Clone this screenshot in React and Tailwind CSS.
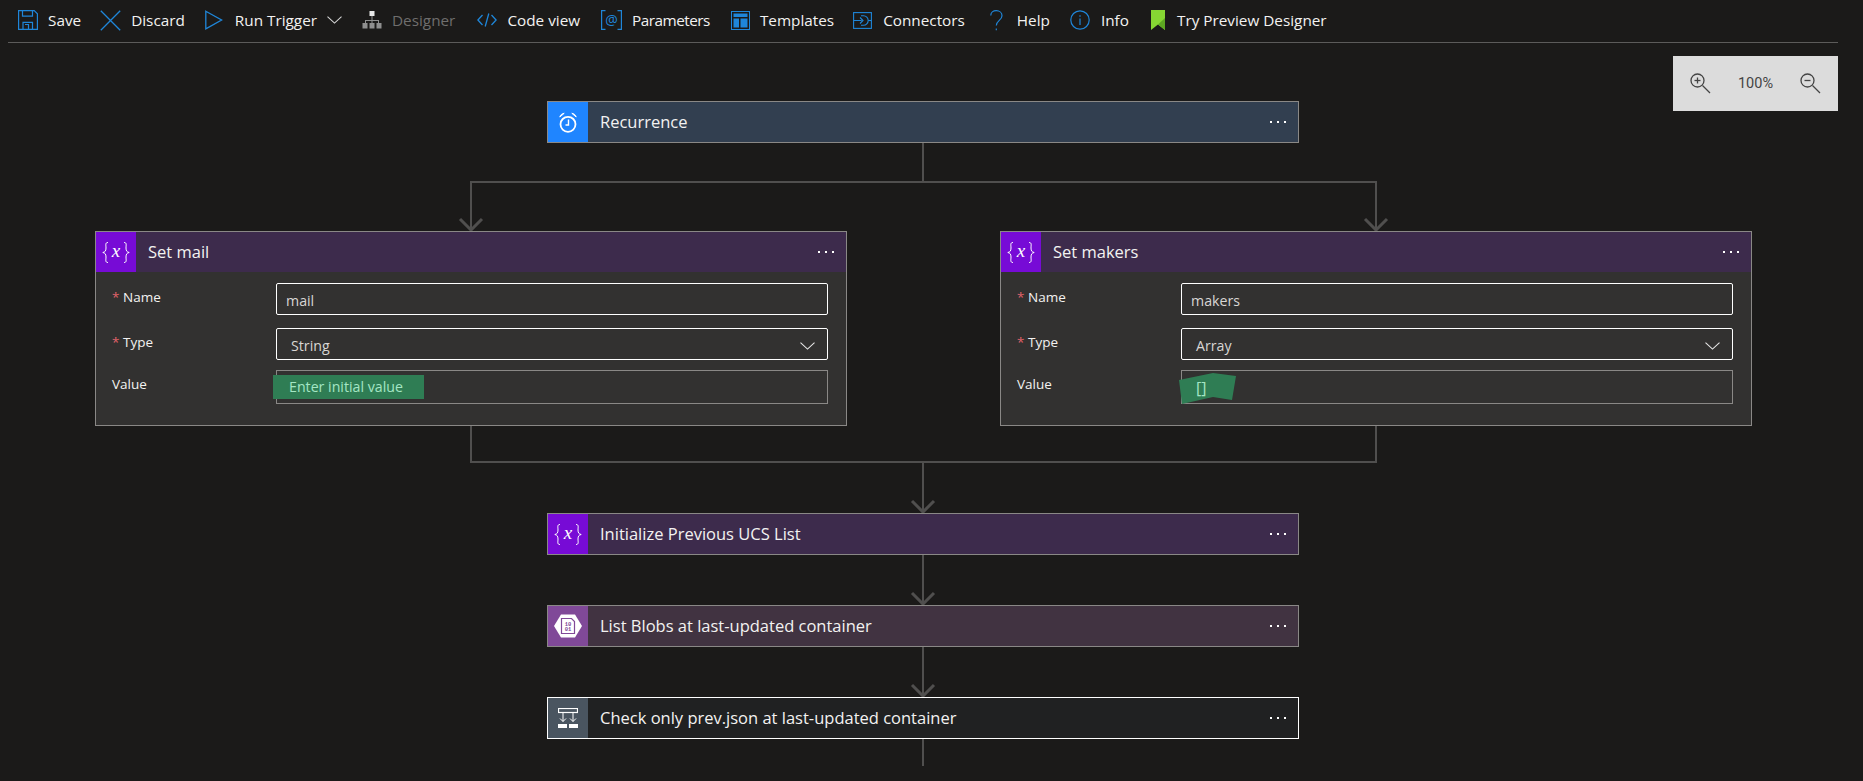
const BLUE = '#1f86d9'

function SaveIcon() {
  return (
    <svg width="20" height="20" viewBox="0 0 20 20" fill="none" stroke={BLUE} strokeWidth="1.2">
      <path d="M.6.6h15.6l3.2 3.2v15.6H.6z" />
      <path d="M4.5.6v5.6h10V.6" />
      <path d="M5 19.4v-7h9.5v7" />
      <path d="M7 14.5h3.5v4.9" />
    </svg>
  )
}

function DiscardIcon() {
  return (
    <svg width="21" height="21" viewBox="0 0 21 21" fill="none" stroke={BLUE} strokeWidth="1.3">
      <path d="M.8.8l19.4 19.4M20.2.8L.8 20.2" />
    </svg>
  )
}

function RunIcon() {
  return (
    <svg width="18" height="20" viewBox="0 0 18 20" fill="none" stroke={BLUE} strokeWidth="1.3">
      <path d="M.8 1.2l15.8 8.8L.8 18.8z" />
    </svg>
  )
}

function ChevronIcon({ width = 15, color = '#d6d6d6' }) {
  return (
    <svg width={width} height="8" viewBox="0 0 15 8" fill="none" stroke={color} strokeWidth="1.1">
      <path d="M.5.7l7 6.4 7-6.4" />
    </svg>
  )
}

function DesignerIcon() {
  return (
    <svg width="20" height="20" viewBox="0 0 20 20" fill="#8f8f8f">
      <rect x="7.5" y="1" width="5" height="5" fill="#e8e8e8" />
      <path d="M9.5 6h1v4H17v3h-1v-2h-5.500v2h-1v-2H4v2H3v-3h6.500z" />
      <rect x="0.500" y="13" width="5" height="5.500" />
      <rect x="7.500" y="13" width="5" height="5.500" />
      <rect x="14.500" y="13" width="5" height="5.500" />
    </svg>
  )
}

function CodeIcon() {
  return (
    <svg width="20" height="14" viewBox="0 0 20 14" fill="none" stroke={BLUE} strokeWidth="1.3">
      <path d="M5.500 2L.9 7l4.600 5M14.500 2l4.600 5-4.600 5M11.800.5L8.200 13.500" />
    </svg>
  )
}

function ParamsIcon() {
  return (
    <svg width="21" height="22" viewBox="0 -1 21 22" fill="none" stroke={BLUE} strokeWidth="1.2">
      <path d="M4.500.6H.6v18.800h3.900M16.500.6h3.900v18.800h-3.900" />
      <text x="10.500" y="14.500" textAnchor="middle" fontSize="14" fill={BLUE} stroke="none" fontFamily="Open Sans, sans-serif">@</text>
    </svg>
  )
}

function TemplatesIcon() {
  return (
    <svg width="19" height="19" viewBox="0 0 19 19" fill={BLUE}>
      <path d="M0 0h19v19H0zm1 1v17h17V1z" />
      <rect x="2.500" y="2.500" width="14" height="3.500" />
      <rect x="2.500" y="7.500" width="5.500" height="9" />
      <rect x="9.500" y="7.500" width="7" height="9" />
    </svg>
  )
}

function ConnectorsIcon() {
  return (
    <svg width="19" height="17" viewBox="0 0 19 17" fill="none" stroke={BLUE} strokeWidth="1.1">
      <rect x="0.600" y="0.600" width="17.800" height="15.800" />
      <path d="M.6 8.500h8M7 5.500l3 3-3 3" />
      <path d="M8 3.800h2.500a4.700 4.700 0 0 1 0 9.400H8" />
      <path d="M15.200 8.500h3.200" />
    </svg>
  )
}

function HelpIcon() {
  return (
    <svg width="13" height="21" viewBox="0 0 13 21" fill="none" stroke={BLUE} strokeWidth="1.2">
      <path d="M.8 5.500C.8 2.700 3.200.7 6.300.7c3.200 0 5.700 2.100 5.700 5 0 4.700-5.700 4.700-5.700 9.900" />
      <path d="M6.300 18.600v1.600" />
    </svg>
  )
}

function InfoIcon() {
  return (
    <svg width="20" height="20" viewBox="0 0 20 20" fill="none" stroke={BLUE} strokeWidth="1.2">
      <circle cx="10" cy="10" r="9.200" />
      <path d="M10 8.500v6.500M10 5.200v1.500" />
    </svg>
  )
}

function TryIcon() {
  return (
    <svg width="14" height="20" viewBox="0 0 14 20">
      <path d="M0 0h14v20l-7-5.500L0 20z" fill="#86d633" />
      <path d="M14 8v12l-7-5.500z" fill="#5ea822" />
    </svg>
  )
}

function AlarmIcon() {
  return (
    <svg width="18" height="21" viewBox="0 0 18 21" fill="none" stroke="#fff" strokeWidth="1.800">
      <circle cx="9" cy="12.300" r="7.500" />
      <path d="M9.500 7.500v5.500H6.500" strokeWidth="1.400" />
      <path d="M.8 5C1.300 3 3 1.500 5.200 1.300zM17.200 5C16.700 3 15 1.500 12.800 1.300z" fill="#fff" strokeWidth="1" />
    </svg>
  )
}

function VariableIcon() {
  return (
    <svg width="28" height="25" viewBox="0 -2 28 25" fill="none" stroke="#fff" strokeWidth="1">
      <path d="M6 .5C3 .5 4 3 4 6c0 3-1 4-3.200 4.500C3 11 4 12 4 15c0 3-1 5.500 2 5.500" />
      <path d="M22 .5c3 0 2 2.500 2 5.500 0 3 1 4 3.200 4.500C25 11 24 12 24 15c0 3 1 5.500-2 5.500" />
      <text x="14" y="15" textAnchor="middle" fontSize="19" fontStyle="italic" fill="#fff" stroke="none" fontFamily="Liberation Serif, serif">x</text>
    </svg>
  )
}

function BlobIcon() {
  return (
    <svg width="28" height="24" viewBox="0 0 28 24">
      <path d="M7 .5h14L28 12l-7 11.500H7L0 12z" fill="#fff" />
      <path d="M7.500 4.500h10l3 3v12h-13z" fill="#fff" stroke="#804998" strokeWidth="1.200" />
      <text x="14" y="11.500" textAnchor="middle" fontSize="5.500" fontWeight="700" fill="#804998" fontFamily="Liberation Mono, monospace">10</text>
      <text x="14" y="17" textAnchor="middle" fontSize="5.500" fontWeight="700" fill="#804998" fontFamily="Liberation Mono, monospace">01</text>
    </svg>
  )
}

function ComposeIcon() {
  return (
    <svg width="20" height="20" viewBox="0 0 20 20" fill="none" stroke="#fff" strokeWidth="1">
      <rect x="0.500" y="0.500" width="19" height="4" strokeWidth="1.200" />
      <path d="M5 4.500v9M2 10.500l3 3 3-3M15 4.500v9M12 10.500l3 3 3-3" />
      <rect x="0" y="16" width="9" height="4" fill="#fff" stroke="none" />
      <rect x="11" y="16" width="9" height="4" fill="#fff" stroke="none" />
    </svg>
  )
}

function ZoomIcon({ minus }) {
  return (
    <svg width="21" height="21" viewBox="0 0 21 21" fill="none" stroke="#444" strokeWidth="1.300">
      <circle cx="7.500" cy="7.500" r="6.500" />
      <path d="M12.500 12.500l7.500 7.500" />
      <path d="M4.500 7.500h6" />
      {!minus && <path d="M7.500 4.500v6" />}
    </svg>
  )
}

const toolbarItems = [
  { label: 'Save', icon: <SaveIcon />, cls: 'ml-0' },
  { label: 'Discard', icon: <DiscardIcon />, cls: 'ml-[19px]' },
  { label: 'Run Trigger', icon: <RunIcon />, cls: 'ml-[20px]', gap: 'gap-[12px]', chevron: true },
  { label: 'Designer', icon: <DesignerIcon />, cls: 'ml-[20px]', disabled: true },
  { label: 'Code view', icon: <CodeIcon />, cls: 'ml-[22px]' },
  { label: 'Parameters', icon: <ParamsIcon />, cls: 'ml-[21px]', text: 'tracking-[-0.5px]' },
  { label: 'Templates', icon: <TemplatesIcon />, cls: 'ml-[21px]' },
  { label: 'Connectors', icon: <ConnectorsIcon />, cls: 'ml-[19px]', gap: 'gap-[11px]' },
  { label: 'Help', icon: <HelpIcon />, cls: 'ml-[25px]', gap: 'gap-[14px]' },
  { label: 'Info', icon: <InfoIcon />, cls: 'ml-[20px]', gap: 'gap-[11px]' },
  { label: 'Try Preview Designer', icon: <TryIcon />, cls: 'ml-[22px]', gap: 'gap-[12px]' },
]

function Toolbar() {
  return (
    <div className="flex items-center h-[43px] ml-[8px] mr-[25px] pl-[10px] pb-[2px] border-b border-[#5c5b5a] text-[15.3px] text-[#f3f2f1]">
      {toolbarItems.map((item) => (
        <div key={item.label} className={`flex items-center ${item.gap || 'gap-[10px]'} ${item.cls}`}>
          {item.icon}
          <span className={`${item.disabled ? 'text-[#6f6e6d]' : ''} ${item.text || ''}`}>{item.label}</span>
          {item.chevron && <span className="flex ml-[-2px]"><ChevronIcon /></span>}
        </div>
      ))}
    </div>
  )
}

function Dots() {
  return (
    <div className="flex gap-[5px] mr-[12px]">
      <span className="size-[2px] bg-white" />
      <span className="size-[2px] bg-white" />
      <span className="size-[2px] bg-white" />
    </div>
  )
}

function CardHeader({ title, icon, iconBg, headerBg }) {
  return (
    <div className={`flex items-center h-[40px] ${headerBg}`}>
      <div className={`flex items-center justify-center w-[40px] h-full ${iconBg}`}>{icon}</div>
      <span className="ml-[12px] flex-1 text-[16.5px] text-[#f3f2f1]">{title}</span>
      <Dots />
    </div>
  )
}

function Card({ title, icon, iconBg, headerBg, selected }) {
  return (
    <div className={`w-[752px] border ${selected ? 'border-white' : 'border-[#8a8886]'}`}>
      <CardHeader title={title} icon={icon} iconBg={iconBg} headerBg={headerBg} />
    </div>
  )
}

function FormRow({ label, required, className, children }) {
  return (
    <div className={`flex ${className}`}>
      <div className="w-[164px] flex text-[13.5px] text-[#f3f2f1] leading-[20px] mt-[4px]">
        {required && <span className="text-[#e0626a] w-[11px]">*</span>}
        {label}
      </div>
      {children}
    </div>
  )
}

function VariableCard({ title, name, type, value }) {
  return (
    <div className="w-[752px] border border-[#8a8886] bg-[#323130]">
      <CardHeader title={title} icon={<VariableIcon />} iconBg="bg-[#770bd6]" headerBg="bg-[#3d2b4c]" />
      <div className="pt-[11px] pb-[21px] pl-[16px] pr-[18px] text-[14.2px]">
        <FormRow label="Name" required>
          <div className="flex-1 h-[32px] border border-white rounded-[2px] pl-[9px] pt-[3px] flex items-center text-[#d8d6d4]">{name}</div>
        </FormRow>
        <FormRow label="Type" required className="mt-[13px]">
          <div className="flex-1 h-[32px] border border-white rounded-[2px] pl-[14px] pr-[12px] pt-[3px] flex items-center justify-between text-[#d8d6d4]">
            {type}
            <ChevronIcon color="#e6e6e6" />
          </div>
        </FormRow>
        <FormRow label="Value" className="mt-[10px]">
          <div className="relative flex-1 h-[34px] border border-[#8a8886]">{value}</div>
        </FormRow>
      </div>
    </div>
  )
}

function Line({ d }) {
  return <path d={d} fill="none" stroke="#504f4e" strokeWidth="2" />
}

function Head({ x, y }) {
  return <path d={`M${x - 11} ${y - 12}L${x} ${y - 1}L${x + 11} ${y - 12}`} fill="none" stroke="#504f4e" strokeWidth="3" />
}

function ArrowLink({ height }) {
  return (
    <svg width="26" height={height} viewBox={`0 0 26 ${height}`} className="block">
      <Line d={`M13 0V${height - 1}`} />
      <Head x={13} y={height} />
    </svg>
  )
}

function App() {
  return (
    <div className="relative h-[781px] overflow-hidden bg-[#1b1a19] font-['Open_Sans',sans-serif]">
      <Toolbar />

      <div className="absolute top-[56px] right-[25px] w-[165px] h-[55px] bg-[#dcdcdc] flex items-center justify-between pl-[17px] pr-[17px] text-[14.5px] text-[#444] font-['Roboto',sans-serif]">
        <ZoomIcon />
        <span>100%</span>
        <ZoomIcon minus />
      </div>

      <div className="w-[1846px] pt-[58px] flex flex-col items-center">
        <Card title="Recurrence" icon={<AlarmIcon />} iconBg="bg-[#1f85ff]" headerBg="bg-[#323f50]" />

        <svg width="1846" height="88" viewBox="0 0 1846 88" className="block">
          <Line d="M923 0V39M471 39H1376M471 38V87M1376 38V87" />
          <Head x={471} y={88} />
          <Head x={1376} y={88} />
        </svg>

        <div className="w-full flex justify-between pl-[95px] pr-[94px]">
          <VariableCard
            title="Set mail"
            name="mail"
            type="String"
            value={
              <span className="absolute left-[-4px] top-[4px] w-[151px] h-[24px] bg-[#2f7d54] pl-[16px] text-[#a4e6c4] leading-[24px]">
                Enter initial value
              </span>
            }
          />
          <VariableCard
            title="Set makers"
            name="makers"
            type="Array"
            value={
              <>
                <svg width="58" height="32" viewBox="0 0 58 32" className="absolute left-[-3px] top-[1px]">
                  <path d="M0 8L34 1L57 4L53 28L34 25L3 32z" fill="#2f7d54" />
                </svg>
                <span className="absolute left-[14px] top-[5px] text-[16px] text-[#a4e6c4] leading-[24px]">[]</span>
              </>
            }
          />
        </div>

        <svg width="1846" height="87" viewBox="0 0 1846 87" className="block">
          <Line d="M471 0V36M1376 0V36M470 36H1377M923 36V86" />
          <Head x={923} y={87} />
        </svg>

        <Card title="Initialize Previous UCS List" icon={<VariableIcon />} iconBg="bg-[#770bd6]" headerBg="bg-[#3d2b4c]" />
        <ArrowLink height={50} />
        <Card title="List Blobs at last-updated container" icon={<BlobIcon />} iconBg="bg-[#804998]" headerBg="bg-[#413341]" />
        <ArrowLink height={50} />
        <Card title="Check only prev.json at last-updated container" icon={<ComposeIcon />} iconBg="bg-[#4a5560]" headerBg="bg-[#202122]" selected />
        <svg width="26" height="27" viewBox="0 0 26 27" className="block">
          <Line d="M13 0V27" />
        </svg>
      </div>
    </div>
  )
}

export default App
